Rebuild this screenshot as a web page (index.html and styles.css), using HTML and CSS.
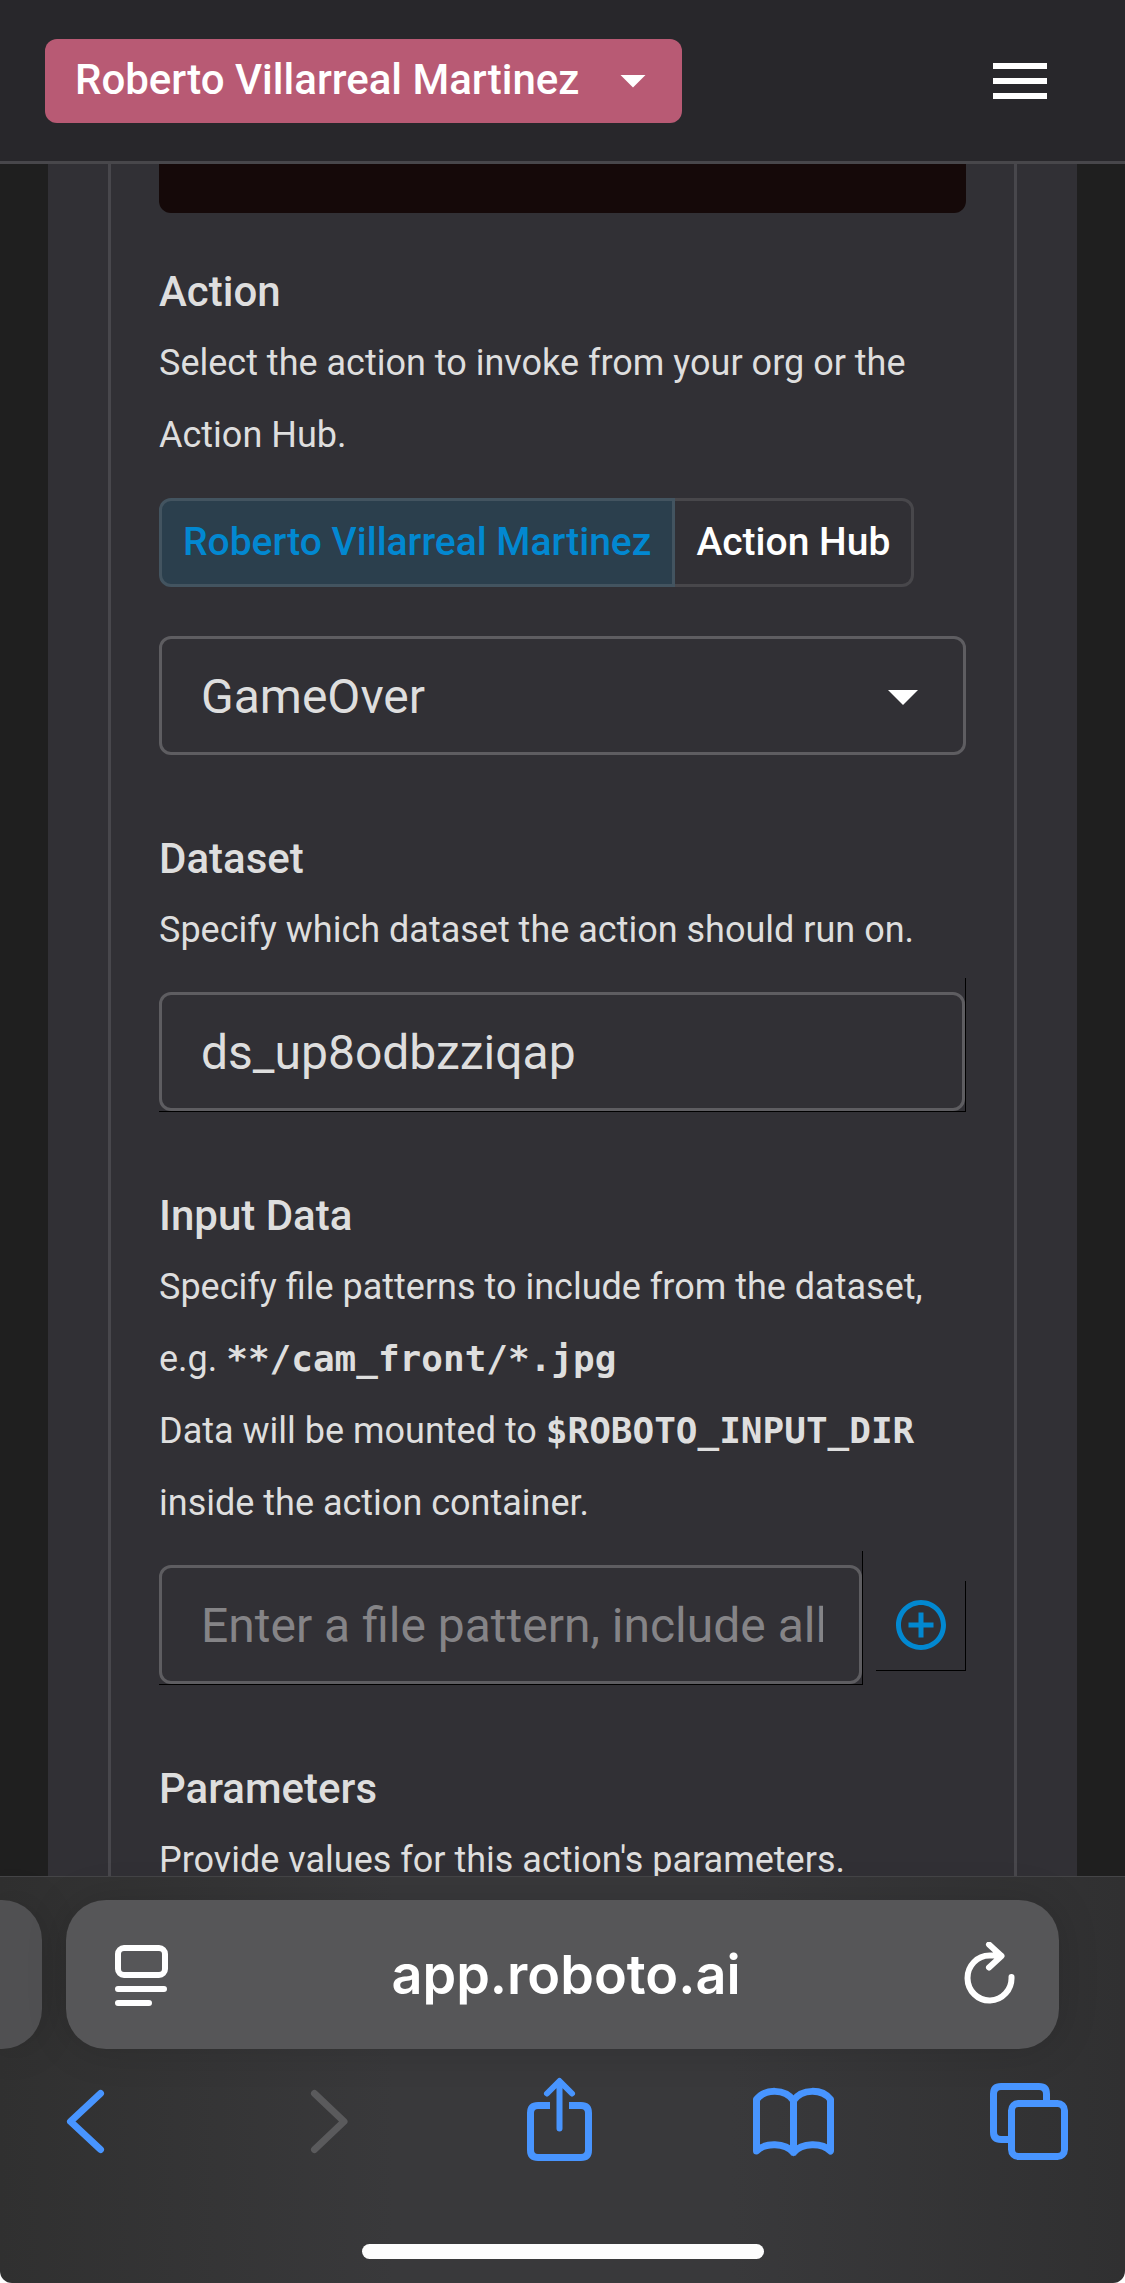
FILE: index.html
```html
<!DOCTYPE html>
<html lang="en">
<head>
<meta charset="utf-8">
<meta name="viewport" content="width=device-width, initial-scale=1">
<title>Invoke action</title>
<link rel="stylesheet" href="styles.css">
</head>
<body>
<header class="topbar">
  <button class="org-button" type="button">
    <span>Roberto Villarreal Martinez</span>
    <svg class="org-caret" viewBox="0 0 24 24" aria-hidden="true"><path d="M7 10l5 5 5-5z"/></svg>
  </button>
  <button class="menu-button" type="button" aria-label="Menu">
    <svg viewBox="0 0 24 24" aria-hidden="true"><path d="M3 18h18v-2H3v2zm0-5h18v-2H3v2zm0-7v2h18V6H3z"/></svg>
  </button>
</header>

<main class="page">
  <div class="panel">
    <form class="card">
      <div class="preview"></div>

      <section class="group">
        <h2>Action</h2>
        <p>Select the action to invoke from your org or the Action Hub.</p>
        <div class="tabs">
          <button class="tab tab-active" type="button">Roberto Villarreal Martinez</button>
          <button class="tab" type="button">Action Hub</button>
        </div>
        <div class="select-wrap">
          <select class="field" aria-label="Action"><option>GameOver</option></select>
          <svg class="select-caret" viewBox="0 0 24 24" aria-hidden="true"><path d="M7 10l5 5 5-5z"/></svg>
        </div>
      </section>

      <section class="group">
        <h2><label for="dataset">Dataset</label></h2>
        <p>Specify which dataset the action should run on.</p>
        <div class="edge">
          <input class="field" id="dataset" type="text" value="ds_up8odbzziqap">
        </div>
      </section>

      <section class="group">
        <h2><label for="pattern">Input Data</label></h2>
        <p>Specify file patterns to include from the dataset, e.g. <code>**/cam_front/*.jpg</code><br>Data will be mounted to <code>$ROBOTO_INPUT_DIR</code> inside the action container.</p>
        <div class="pattern-row">
          <div class="edge">
            <input class="field" id="pattern" type="text" placeholder="Enter a file pattern, include all">
          </div>
          <button class="add-button" type="button" aria-label="Add pattern">
            <svg viewBox="0 0 24 24" aria-hidden="true"><path d="M13 7h-2v4H7v2h4v4h2v-4h4v-2h-4V7zm-1-5C6.480 2 2 6.480 2 12s4.480 10 10 10 10-4.480 10-10S17.520 2 12 2zm0 18c-4.410 0-8-3.590-8-8s3.590-8 8-8 8 3.590 8 8-3.590 8-8 8z"/></svg>
          </button>
        </div>
      </section>

      <section class="group">
        <h2>Parameters</h2>
        <p>Provide values for this action's parameters.</p>
      </section>
    </form>
  </div>
</main>

<footer class="browser">
  <div class="address-row">
    <div class="prev-tab"></div>
    <div class="address">
      <button type="button" aria-label="Page options">
        <svg class="page-icon" viewBox="0 0 60 66" aria-hidden="true"><rect x="6" y="6" width="47" height="27" rx="6"/><path d="M6 47h46M6 61h31"/></svg>
      </button>
      <span class="url">app.roboto.ai</span>
      <button type="button" aria-label="Reload">
        <svg class="reload-icon" viewBox="0 0 60 66" aria-hidden="true"><path d="M51.500 35A22 22.500 0 1 1 29.500 13.500H41M29 2.500L41.500 14 29 25.500"/></svg>
      </button>
    </div>
  </div>
  <nav class="toolbar">
    <button type="button" aria-label="Back"><svg viewBox="0 0 100 100"><path d="M65.500 21.500L35.500 49.500l30 28"/></svg></button>
    <button type="button" aria-label="Forward" disabled><svg viewBox="0 0 100 100"><path d="M43.500 21.500l29.500 28-29.500 28"/></svg></button>
    <button type="button" aria-label="Share"><svg viewBox="0 0 100 100"><path class="cut" d="M43 33.500H31q-7.500 0-7.500 7.500v37q0 7.500 7.500 7.500h43q7.500 0 7.500-7.500V41q0-7.500-7.500-7.500H62"/><path class="thin" d="M52.500 10v46.500M40 21.500L52.500 9 65 21.500"/></svg></button>
    <button type="button" aria-label="Bookmarks"><svg viewBox="0 0 100 100"><path d="M50.500 80.500V28.500C42 16.500 22 16.500 13.500 27.500V79C22 70.500 42 70.500 50.500 80.500C59 70.500 79 70.500 87.500 79V27.500C79 16.500 59 16.500 50.500 28.500"/></svg></button>
    <button type="button" aria-label="Tabs"><svg viewBox="0 0 100 100"><path class="cut" d="M67.500 30V22q0-7.500-7.500-7.500H22q-7.500 0-7.500 7.500v38q0 7.500 7.500 7.500h9"/><rect x="32.500" y="31.500" width="53" height="53" rx="7"/></svg></button>
  </nav>
  <div class="home-indicator"></div>
</footer>
</body>
</html>
```

FILE: styles.css
```css
* { box-sizing: border-box; }

body {
  margin: 0;
  height: 100vh;
  display: flex;
  flex-direction: column;
  background: #fff;
  color: #dedede;
  font-family: Roboto, "Liberation Sans", sans-serif;
}

button {
  margin: 0;
  padding: 0;
  border: 0;
  background: none;
  color: #fff;
  font: inherit;
}

svg { display: block; fill: currentColor; }

/* App header */
.topbar {
  flex: none;
  display: flex;
  align-items: center;
  justify-content: space-between;
  height: 164px;
  padding: 0 69px 0 45px;
  border-bottom: 3px solid #48474b;
  background: #28272b;
}

.org-button {
  display: flex;
  align-items: center;
  gap: 24px;
  height: 84px;
  padding: 0 19px 2px 30px;
  border-radius: 12px;
  background: #b85a74;
  font-size: 42px;
  font-weight: 500;
}

.org-caret { width: 60px; height: 60px; }
.menu-button svg { width: 72px; height: 72px; }

/* Form page */
.page {
  flex: 1;
  min-height: 0;
  overflow: hidden;
  padding: 0 48px;
  background: #1f1f1f;
}

.panel { padding: 0 60px; background: #313035; }

.card {
  padding: 0 48px 60px;
  border: solid #48474c;
  border-width: 0 3px;
}

.preview {
  height: 49px;
  margin-bottom: 44px;
  border-radius: 0 0 12px 12px;
  background: #150909;
}

.group { margin-bottom: 69px; }

h2 {
  margin: 0;
  font-size: 42px;
  line-height: 70px;
  font-weight: 500;
}

p { margin: 0; font-size: 36px; line-height: 72px; }

code {
  font-family: "DejaVu Sans Mono", monospace;
  font-size: 36px;
  font-weight: 700;
  line-height: 1;
}

.tabs { display: flex; margin: 27px 0 49px; }

.tab {
  height: 89px;
  padding: 0 21px 2px;
  border: 3px solid #48474b;
  border-left: 0;
  border-radius: 0 12px 12px 0;
  font-size: 39px;
  font-weight: 500;
}

.tab-active {
  border: 3px solid #435460;
  border-radius: 12px 0 0 12px;
  background: #2b3f4d;
  color: #0288d1;
}

.field {
  display: block;
  width: 100%;
  height: 119px;
  margin: 0;
  padding: 2px 36px 0 39px;
  border: 3px solid #5e5d61;
  border-radius: 12px;
  background: transparent;
  color: #dedede;
  font: 48px Roboto, "Liberation Sans", sans-serif;
  appearance: none;
}

.field::placeholder { color: #858487; opacity: 1; }

.select-wrap { position: relative; }

.select-caret {
  position: absolute;
  top: 24px;
  right: 27px;
  width: 72px;
  height: 72px;
  color: #fff;
  pointer-events: none;
}

.edge {
  flex: 1;
  margin-top: 12px;
  padding-top: 14px;
  border: solid #000;
  border-width: 0 1px 1px 0;
}

.pattern-row { display: flex; align-items: center; gap: 13px; }

.add-button {
  display: grid;
  place-items: center;
  width: 90px;
  height: 90px;
  margin-top: 27px;
  border: solid #000;
  border-width: 0 1px 1px 0;
  color: #0288d1;
}

.add-button svg { width: 60px; height: 60px; }

/* Browser chrome */
.browser {
  flex: none;
  padding: 23px 0 24px;
  border-top: 1px solid #454547;
  border-radius: 0 0 12px 12px;
  background: linear-gradient(90deg, #303030, #39393b 35%, #39393b 65%, #303031);
}

.address-row { display: flex; gap: 24px; padding-right: 66px; }

.prev-tab, .address {
  height: 149px;
  border-radius: 40px;
  background: #565658;
  box-shadow: 0 0 40px rgba(0, 0, 0, 0.15);
}

.prev-tab {
  width: 42px;
  border-radius: 0 40px 40px 0;
  background: #505052;
}

.address {
  flex: 1;
  display: flex;
  align-items: center;
  justify-content: space-between;
  padding: 0 39px 0 46px;
}

.address svg {
  width: 60px;
  height: 66px;
  fill: none;
  stroke: #fff;
  stroke-width: 6;
  stroke-linecap: round;
  stroke-linejoin: round;
}

.url { color: #fff; font: 600 54px Inter, "Liberation Sans", sans-serif; }

.toolbar {
  display: flex;
  justify-content: space-between;
  margin: 23px 0 72px;
  padding: 0 46px 0 35px;
}

.toolbar button { color: #4895ff; }
.toolbar button:disabled { color: #5a5a5c; }

.toolbar svg {
  width: 100px;
  height: 100px;
  fill: none;
  stroke: currentColor;
  stroke-width: 7;
  stroke-linecap: round;
  stroke-linejoin: round;
}

.toolbar .cut { stroke-linecap: butt; }
.toolbar .thin { stroke-width: 6; }

.home-indicator {
  width: 402px;
  height: 15px;
  margin: 0 auto;
  border-radius: 8px;
  background: #fdfdfd;
}
```
